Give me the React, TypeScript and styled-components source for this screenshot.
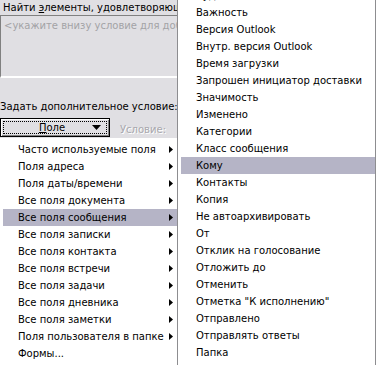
import React from 'react';
import styled, { createGlobalStyle } from 'styled-components';

const GlobalStyle = createGlobalStyle`
  html, body {
    margin: 0;
    padding: 0;
    background: #ffffff;
  }
  body {
    font-family: 'DejaVu Sans', Tahoma, sans-serif;
    font-size: 10px;
    color: #000;
  }
`;

const Screen = styled.div`
  display: flex;
  width: 379px;
  height: 365px;
  overflow: hidden;
  background: #fff;
`;

const LeftColumn = styled.div`
  display: flex;
  flex-direction: column;
  width: 177px;
  flex-shrink: 0;
`;

const DialogPane = styled.div`
  display: flex;
  flex-direction: column;
  height: 138px;
  background: #e0dfe3;
  white-space: nowrap;
  overflow: hidden;
`;

const Title = styled.div`
  height: 15px;
  line-height: 15px;
  padding-left: 3px;
`;

const TextBox = styled.div`
  box-sizing: border-box;
  height: 63px;
  padding: 3px 0 0 3px;
  border-top: 1px solid #808080;
  border-left: 1px solid #808080;
  border-bottom: 2px solid #ffffff;
  color: #a3a3a6;
  line-height: 14px;
`;

const Label = styled.div`
  margin-top: 21px;
  height: 15px;
  line-height: 15px;
`;

const ButtonRow = styled.div`
  display: flex;
  align-items: flex-end;
  gap: 10px;
  margin-top: 4px;
`;

const FieldButton = styled.div`
  box-sizing: border-box;
  width: 110px;
  height: 19px;
  padding: 2px;
  border: 1px solid #000;
  background: #e0dfe3;
  box-shadow: inset 1px 1px #fff, inset -1px -1px #808080;
`;

const FocusRect = styled.div`
  box-sizing: border-box;
  display: flex;
  align-items: center;
  height: 100%;
  padding: 0 5px 0 0;
  border: 1px dotted #000;
`;

const ButtonText = styled.span`
  flex: 1;
  text-align: center;
  padding-left: 8px;
`;

const Accel = styled.span`
  text-decoration: underline;
`;

const DisabledLabel = styled.span`
  color: #a8a7ad;
  text-shadow: 1px 1px #ffffff;
  line-height: 15px;
`;

const Menu = styled.div<{ $offset?: number }>`
  display: flex;
  flex-direction: column;
  padding-top: 3px;
  margin-top: ${(p) => p.$offset ?? 0}px;
`;

const SubMenu = styled.div`
  box-sizing: border-box;
  width: 199px;
  height: 365px;
  flex-shrink: 0;
  overflow: hidden;
  background: #fff;
  border-left: 1px solid #8d8d90;
  border-right: 1px solid #8d8d90;
`;

const Item = styled.div<{ $active?: boolean; $inset: number }>`
  display: flex;
  align-items: center;
  justify-content: space-between;
  height: 17px;
  margin-left: ${(p) => p.$inset}px;
  margin-right: ${(p) => (p.$inset === 3 ? 0 : 3)}px;
  padding: 0 4px 0 15px;
  background: ${(p) => (p.$active ? '#b5b4c6' : 'transparent')};
  white-space: nowrap;
`;

const Arrow = () => (
  <svg width="4" height="7" viewBox="0 0 4 7">
    <path d="M0 0 L4 3.5 L0 7 Z" fill="#000" />
  </svg>
);

const DownArrow = () => (
  <svg width="9" height="5" viewBox="0 0 9 5">
    <path d="M0 0 H9 L4.5 5 Z" fill="#000" />
  </svg>
);

const groups = [
  'Часто используемые поля',
  'Поля адреса',
  'Поля даты/времени',
  'Все поля документа',
  'Все поля сообщения',
  'Все поля записки',
  'Все поля контакта',
  'Все поля встречи',
  'Все поля задачи',
  'Все поля дневника',
  'Все поля заметки',
  'Поля пользователя в папке',
];

const fields = [
  'Будильник',
  'Важность',
  'Версия Outlook',
  'Внутр. версия Outlook',
  'Время загрузки',
  'Запрошен инициатор доставки',
  'Значимость',
  'Изменено',
  'Категории',
  'Класс сообщения',
  'Кому',
  'Контакты',
  'Копия',
  'Не автоархивировать',
  'От',
  'Отклик на голосование',
  'Отложить до',
  'Отменить',
  'Отметка "К исполнению"',
  'Отправлено',
  'Отправлять ответы',
  'Папка',
];

export default function App() {
  return (
    <>
      <GlobalStyle />
      <Screen>
        <LeftColumn>
          <DialogPane>
            <Title>
              Найти <Accel>э</Accel>лементы, удовлетворяющим условиям
            </Title>
            <TextBox>&lt;укажите внизу условие для добавления&gt;</TextBox>
            <Label>Задать дополнительное условие:</Label>
            <ButtonRow>
              <FieldButton>
                <FocusRect>
                  <ButtonText>
                    <Accel>П</Accel>оле
                  </ButtonText>
                  <DownArrow />
                </FocusRect>
              </FieldButton>
              <DisabledLabel>Условие:</DisabledLabel>
            </ButtonRow>
          </DialogPane>
          <Menu>
            {groups.map((g) => (
              <Item key={g} $inset={3} $active={g === 'Все поля сообщения'}>
                <span>{g}</span>
                <Arrow />
              </Item>
            ))}
            <Item $inset={3}>
              <span>Формы...</span>
            </Item>
          </Menu>
        </LeftColumn>
        <SubMenu>
          <Menu $offset={-16}>
            {fields.map((f) => (
              <Item key={f} $inset={3} $active={f === 'Кому'}>
                <span>{f}</span>
              </Item>
            ))}
          </Menu>
        </SubMenu>
      </Screen>
    </>
  );
}
